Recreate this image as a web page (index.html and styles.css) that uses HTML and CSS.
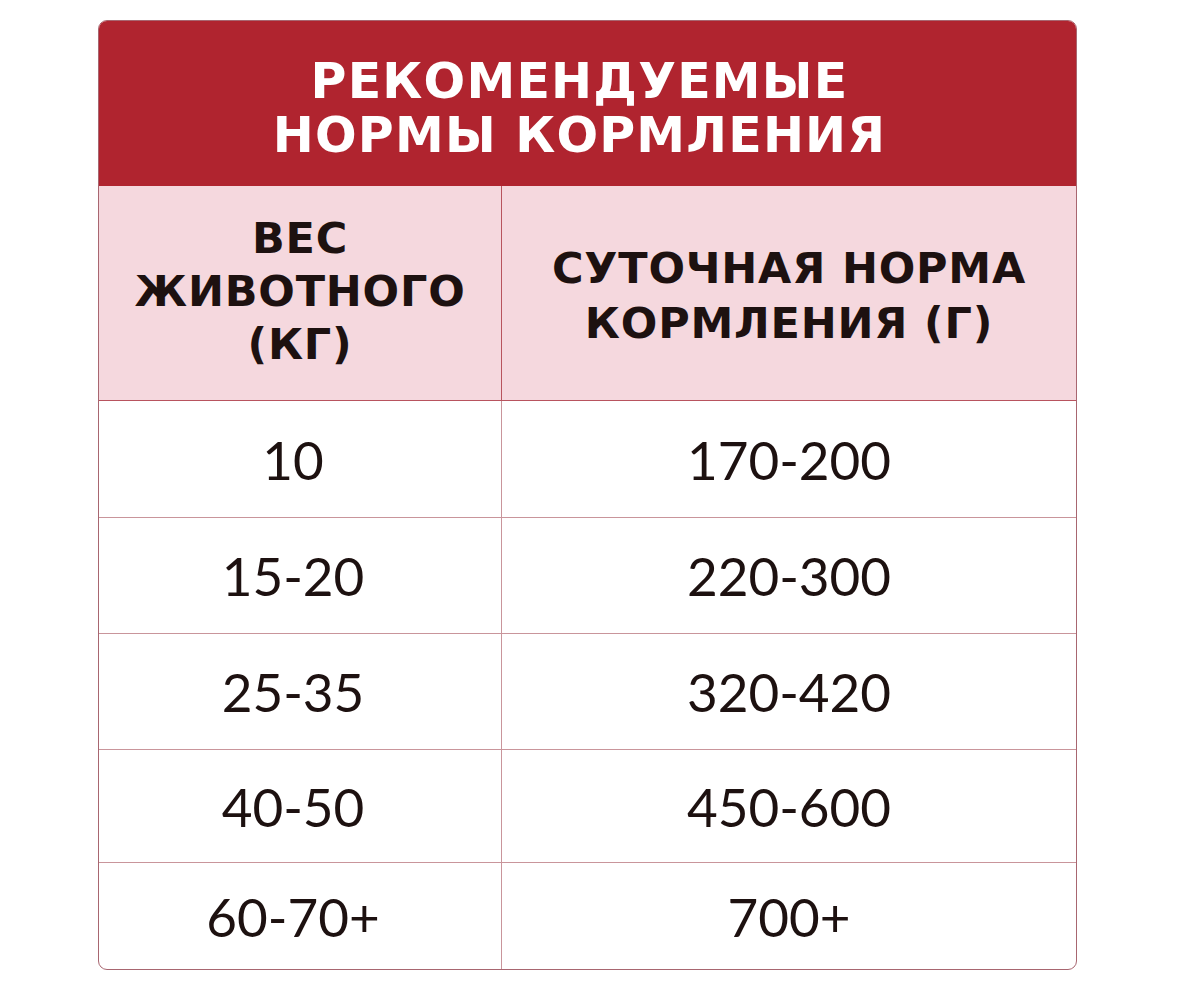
FILE: index.html
```html
<!DOCTYPE html>
<html lang="ru">
<head>
<meta charset="utf-8">
<title>Рекомендуемые нормы кормления</title>
<link rel="stylesheet" href="styles.css">
</head>
<body>
<div class="card">
  <div class="title">РЕКОМЕНДУЕМЫЕ<br>НОРМЫ КОРМЛЕНИЯ</div>
  <div class="grid">
    <div class="head left">ВЕС<br>ЖИВОТНОГО<br>(КГ)</div>
    <div class="head right">СУТОЧНАЯ НОРМА<br>КОРМЛЕНИЯ (Г)</div>
    <div class="cell left">10</div><div class="cell right">170-200</div>
    <div class="cell left">15-20</div><div class="cell right">220-300</div>
    <div class="cell left">25-35</div><div class="cell right">320-420</div>
    <div class="cell left">40-50</div><div class="cell right">450-600</div>
    <div class="cell left last">60-70+</div><div class="cell right last">700+</div>
  </div>
</div>
</body>
</html>
```

FILE: styles.css
```css
html, body {
  margin: 0;
  padding: 0;
  background: #ffffff;
}
.card {
  margin: 20px 0 0 98px;
  width: 979px;
  height: 950px;
  box-sizing: border-box;
  border: 1.5px solid #a86670;
  border-radius: 9px;
  overflow: hidden;
  display: flex;
  flex-direction: column;
}
.title {
  height: 165px;
  flex: none;
  background: #b0242f;
  color: #ffffff;
  font-family: "DejaVu Sans", sans-serif;
  font-weight: bold;
  font-size: 49px;
  line-height: 54px;
  letter-spacing: 1.2px;
  text-align: center;
  display: flex;
  align-items: center;
  justify-content: center;
  padding: 10px 16px 0 0;
  box-sizing: border-box;
}
.grid {
  flex: 1;
  display: grid;
  grid-template-columns: 403px 1fr;
  grid-template-rows: 215px 117px 116px 116px 113px 1fr;
}
.head {
  background: #f5d8de;
  color: #1d1110;
  font-family: "DejaVu Sans", sans-serif;
  font-weight: bold;
  font-size: 43px;
  line-height: 53px;
  letter-spacing: 0.8px;
  text-align: center;
  display: flex;
  align-items: center;
  justify-content: center;
  border-bottom: 1.5px solid #b8545e;
}
.head.left {
  border-right: 1.5px solid #b8545e;
  padding-bottom: 4px;
  box-sizing: border-box;
}
.head.right {
  line-height: 55px;
  padding-top: 6px;
  box-sizing: border-box;
}
.cell {
  color: #1d1110;
  font-family: Lato, "Liberation Sans", sans-serif;
  font-size: 53px;
  text-align: center;
  display: flex;
  align-items: center;
  justify-content: center;
  border-bottom: 1.5px solid #c9959b;
}
.cell.left {
  border-right: 1.5px solid #c9959b;
  padding-right: 14px;
}
.cell.last {
  border-bottom: none;
}
```
